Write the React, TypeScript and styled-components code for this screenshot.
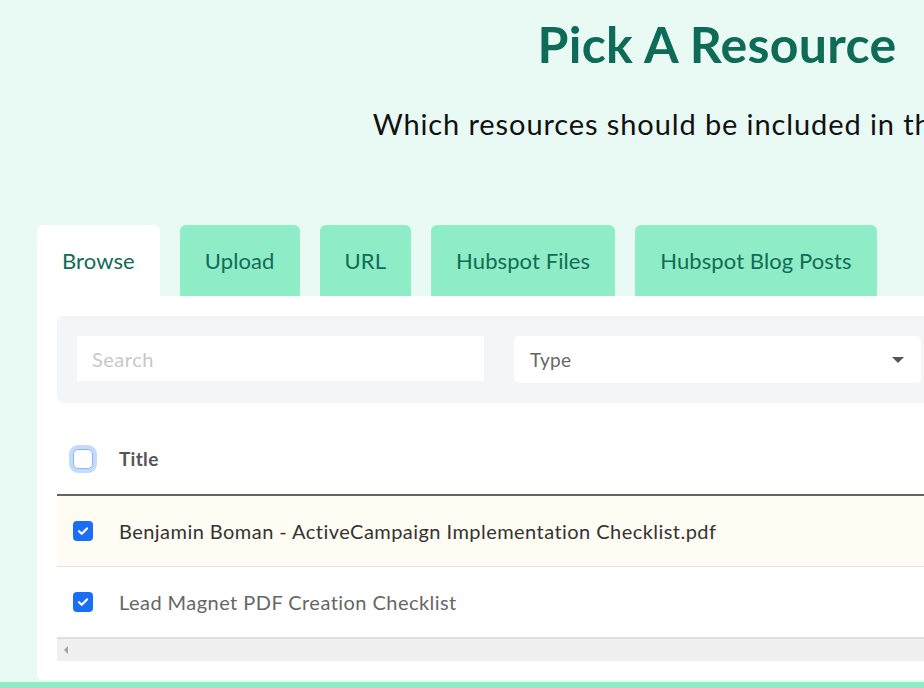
import styled, { createGlobalStyle } from "styled-components";

/* ── GLOBAL ── */

const GlobalStyle = createGlobalStyle`
  html, body {
    margin: 0;
    padding: 0;
    background: #e8faf3;
    overflow: hidden;
  }
  body {
    font-family: Lato, "Open Sans", sans-serif;
    width: 924px;
    height: 688px;
  }
`;

/* ── LAYOUT ── */

const Page = styled.div`
  width: 1434px;
  height: 688px;
  display: flex;
  flex-direction: column;
  position: relative;
`;

const Header = styled.header`
  display: flex;
  flex-direction: column;
  align-items: center;
  padding-top: 14px;
  height: 211px;
  box-sizing: border-box;
`;

const Title = styled.h1`
  margin: 0;
  font-size: 50px;
  font-weight: 700;
  line-height: 60px;
  letter-spacing: 0.3px;
  color: #0e6b57;
`;

const Subtitle = styled.p`
  margin: 30px 0 0;
  font-size: 29px;
  line-height: 40px;
  letter-spacing: 0.9px;
  color: #111;
`;

const Body = styled.div`
  padding: 14px 0 0 37px;
  display: flex;
  flex-direction: column;
`;

/* ── TABS ── */

const TabBar = styled.div`
  display: flex;
  gap: 20px;
  height: 71px;
`;

const Tab = styled.button<{ $active?: boolean }>`
  border: none;
  border-radius: 6px 6px 0 0;
  padding: 0 25px;
  font-family: inherit;
  font-size: 22px;
  letter-spacing: 0.1px;
  color: #126b55;
  background: ${(p) => (p.$active ? "#ffffff" : "#8eedc7")};
  cursor: pointer;
`;

/* ── CARD ── */

const Card = styled.div`
  background: #fff;
  border-radius: 0 0 0 6px;
  padding: 20px;
  height: 384px;
  box-sizing: border-box;
`;

const FilterBox = styled.div`
  background: #f4f5f7;
  border-radius: 6px;
  padding: 20px;
  display: grid;
  grid-template-columns: 407px 407px 407px;
  gap: 30px;
  align-items: start;
`;

const SearchInput = styled.input`
  height: 45px;
  border: none;
  padding: 0 15px;
  font-family: inherit;
  font-size: 20px;
  letter-spacing: 0.5px;
  background: #fff;
  outline: none;
  box-sizing: border-box;

  &::placeholder {
    color: #c8c8c8;
  }
`;

const Select = styled.div`
  height: 47px;
  border-radius: 5px;
  background: #fff;
  display: flex;
  align-items: center;
  justify-content: space-between;
  padding: 0 17px 0 16px;
  font-size: 19px;
  letter-spacing: 0.3px;
  color: #666;
  box-sizing: border-box;
`;

const Caret = styled.span`
  width: 0;
  height: 0;
  border-left: 6px solid transparent;
  border-right: 6px solid transparent;
  border-top: 6px solid #555;
`;

/* ── TABLE ── */

const Table = styled.div`
  display: flex;
  flex-direction: column;
`;

const HeadRow = styled.div`
  display: flex;
  align-items: center;
  height: 93px;
  padding-top: 20px;
  box-sizing: border-box;
  border-bottom: 2px solid #66645f;
`;

const Row = styled.div<{ $highlight?: boolean; $muted?: boolean }>`
  display: flex;
  align-items: center;
  height: 71px;
  box-sizing: border-box;
  border-bottom: 1px solid #dee2e6;
  background: ${(p) => (p.$highlight ? "#fffcf3" : "#fff")};
  color: ${(p) => (p.$muted ? "#666" : "#333")};
  font-size: 20px;
  letter-spacing: 0.45px;
`;

const CheckCell = styled.div`
  width: 62px;
  padding-left: 16px;
  box-sizing: border-box;
  display: flex;
`;

const HeadCheck = styled.span`
  width: 20px;
  height: 20px;
  border-radius: 5px;
  border: 1px solid #86b7fe;
  background: #fff;
  box-shadow: 0 0 0 4px #c2dbfe;
  box-sizing: border-box;
`;

const Check = styled.span`
  width: 20px;
  height: 20px;
  border-radius: 4px;
  background: #1a6ef5;
  display: flex;
  align-items: center;
  justify-content: center;
`;

const HeadLabel = styled.span`
  font-size: 19px;
  font-weight: 700;
  letter-spacing: 0.3px;
  color: #555;
`;

const ScrollBar = styled.div`
  height: 22px;
  background: #f0f0f0;
  border-top: 1px solid #dcdcdc;
  display: flex;
  align-items: center;
  padding-left: 7px;
`;

const ArrowLeft = styled.span`
  width: 0;
  height: 0;
  border-top: 4px solid transparent;
  border-bottom: 4px solid transparent;
  border-right: 4px solid #a3a3a3;
`;

const BottomStrip = styled.div`
  position: absolute;
  left: 0;
  right: 0;
  bottom: 0;
  height: 6px;
  background: #8eedc7;
`;

const tabs = ["Browse", "Upload", "URL", "Hubspot Files", "Hubspot Blog Posts"];

const resources = [
  { title: "Benjamin Boman - ActiveCampaign Implementation Checklist.pdf", highlight: true },
  { title: "Lead Magnet PDF Creation Checklist", muted: true },
];

function Tick() {
  return (
    <svg width="12" height="10" viewBox="0 0 12 10">
      <path d="M2 5.2l2.8 2.6L10 2.4" fill="none" stroke="#fff" strokeWidth="2.2" strokeLinecap="round" strokeLinejoin="round" />
    </svg>
  );
}

export default function App() {
  return (
    <>
      <GlobalStyle />
      <Page>
        <Header>
          <Title>Pick A Resource</Title>
          <Subtitle>Which resources should be included in this funnel?</Subtitle>
        </Header>
        <Body>
          <TabBar>
            {tabs.map((t, i) => (
              <Tab key={t} $active={i === 0}>
                {t}
              </Tab>
            ))}
          </TabBar>
          <Card>
            <FilterBox>
              <SearchInput placeholder="Search" />
              <Select>
                Type
                <Caret />
              </Select>
              <Select>
                Tags
                <Caret />
              </Select>
            </FilterBox>
            <Table>
              <HeadRow>
                <CheckCell>
                  <HeadCheck />
                </CheckCell>
                <HeadLabel>Title</HeadLabel>
              </HeadRow>
              {resources.map((r) => (
                <Row key={r.title} $highlight={r.highlight} $muted={r.muted}>
                  <CheckCell>
                    <Check>
                      <Tick />
                    </Check>
                  </CheckCell>
                  {r.title}
                </Row>
              ))}
              <ScrollBar>
                <ArrowLeft />
              </ScrollBar>
            </Table>
          </Card>
        </Body>
        <BottomStrip />
      </Page>
    </>
  );
}
